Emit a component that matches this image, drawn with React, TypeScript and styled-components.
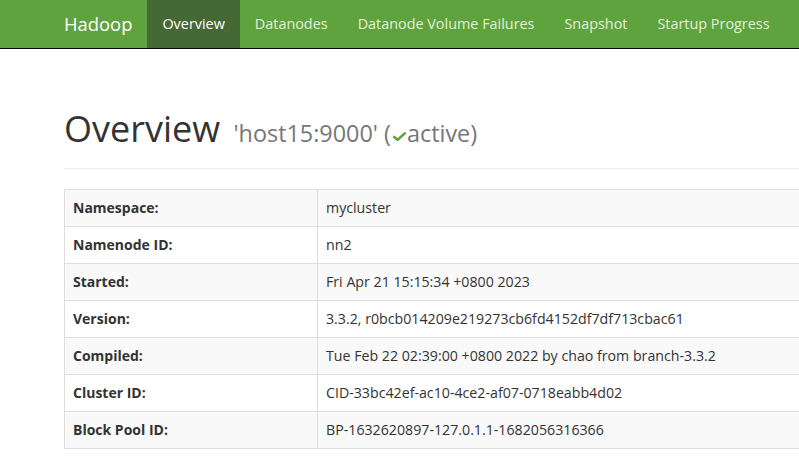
import * as React from 'react'
import styled, { createGlobalStyle } from 'styled-components'

const GlobalStyle = createGlobalStyle`
    html, body {
        margin: 0;
        padding: 0;
        overflow: hidden;
        background: #fff;
    }
    body {
        font-family: "Open Sans", "Noto Sans", Arial, sans-serif;
        font-size: 14px;
        line-height: 1.42857;
        color: #333;
    }
`

const Navbar = styled.nav`
    height: 48px;
    background: #5fa33e;
    border-bottom: 1px solid #080808;
`

const NavInner = styled.div`
    display: flex;
    align-items: stretch;
    height: 48px;
    margin-left: 49px;
    white-space: nowrap;
`

const Brand = styled.a`
    display: flex;
    align-items: center;
    padding: 0 15px;
    font-size: 18.4px;
    color: #fff;
    text-decoration: none;
`

const NavLink = styled.a<{ $active?: boolean }>`
    display: flex;
    align-items: center;
    padding: 0 15px;
    font-size: 14.4px;
    text-decoration: none;
    color: ${(p) => (p.$active ? '#fff' : '#e3f1d9')};
    background: ${(p) => (p.$active ? '#456935' : 'transparent')};
`

const Container = styled.div`
    width: 1140px;
    margin-left: 64px;
    padding-top: 20px;
`

const PageHeader = styled.div`
    margin: 40px 0 20px;
    padding-bottom: 9px;
    border-bottom: 1px solid #eee;
`

const Title = styled.h1`
    margin: 0 0 10px;
    font-size: 36px;
    font-weight: 400;
    line-height: 1.1;
    color: #333;
    white-space: nowrap;
`

const Small = styled.small`
    font-size: 65%;
    color: #777;
    margin-left: 4px;
`

const Check = styled.svg`
    width: 13px;
    height: 9px;
    margin: 0 1px 0 2px;
    vertical-align: 1px;
`

const Table = styled.table`
    width: 100%;
    border-collapse: collapse;
    border: 1px solid #ddd;
`

const Row = styled.tr<{ $striped: boolean }>`
    background: ${(p) => (p.$striped ? '#f9f9f9' : '#fff')};
`

const Th = styled.th`
    width: 236px;
    padding: 8px;
    text-align: left;
    font-weight: 700;
    border: 1px solid #ddd;
    line-height: 20px;
`

const Td = styled.td`
    padding: 8px;
    border: 1px solid #ddd;
    line-height: 20px;
    font-size: 14.2px;
    white-space: nowrap;
`

const navItems = ['Datanodes', 'Datanode Volume Failures', 'Snapshot', 'Startup Progress', 'Utilities']

const info = [
    ['Namespace:', 'mycluster'],
    ['Namenode ID:', 'nn2'],
    ['Started:', 'Fri Apr 21 15:15:34 +0800 2023'],
    ['Version:', '3.3.2, r0bcb014209e219273cb6fd4152df7df713cbac61'],
    ['Compiled:', 'Tue Feb 22 02:39:00 +0800 2022 by chao from branch-3.3.2'],
    ['Cluster ID:', 'CID-33bc42ef-ac10-4ce2-af07-0718eabb4d02'],
    ['Block Pool ID:', 'BP-1632620897-127.0.1.1-1682056316366'],
]

export default function App() {
    return (
        <>
            <GlobalStyle />
            <Navbar>
                <NavInner>
                    <Brand href="#">Hadoop</Brand>
                    <NavLink href="#" $active>Overview</NavLink>
                    {navItems.map((n) => (
                        <NavLink key={n} href="#">{n}</NavLink>
                    ))}
                </NavInner>
            </Navbar>
            <Container>
                <PageHeader>
                    <Title>
                        Overview{' '}
                        <Small>
                            'host15:9000' (
                            <Check viewBox="0 0 13 9">
                                <path d="M1.2 5 L4.6 7.8 L11.8 1.4" fill="none" stroke="#5fa33e" strokeWidth="2.6" strokeLinecap="round" strokeLinejoin="round" />
                            </Check>
                            active)
                        </Small>
                    </Title>
                </PageHeader>
                <Table>
                    <tbody>
                        {info.map(([k, v], i) => (
                            <Row key={k} $striped={i % 2 === 0}>
                                <Th>{k}</Th>
                                <Td>{v}</Td>
                            </Row>
                        ))}
                    </tbody>
                </Table>
            </Container>
        </>
    )
}
